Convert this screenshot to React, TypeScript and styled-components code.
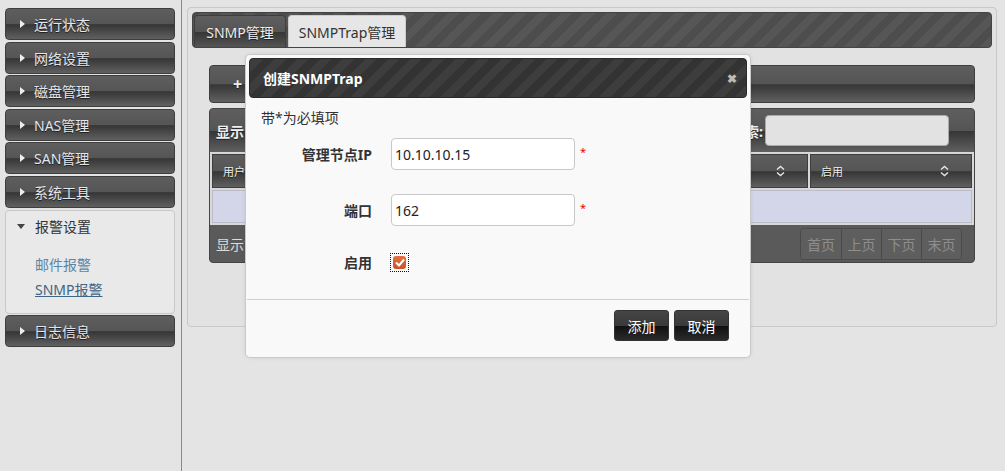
import styled, { createGlobalStyle, css } from "styled-components";

const GlobalStyle = createGlobalStyle`
  html, body {
    margin: 0;
    padding: 0;
    background: #e4e4e4;
    font-family: "Noto Sans", "Noto Sans CJK SC", sans-serif;
    font-size: 14px;
    color: #333;
  }
  * { box-sizing: border-box; }
`;

const glossy = css`
  background: linear-gradient(
    to bottom,
    #5e5e5e 0%,
    #555 50%,
    #363636 52%,
    #4a4a4a 75%,
    #606060 100%
  );
  border: 1px solid #3e3e3e;
  border-radius: 4px;
  color: #eee;
  text-shadow: 0 1px 0 #222;
`;

const stripes = (base: string) => css`
  background-color: ${base};
  background-image: repeating-linear-gradient(
    -45deg,
    rgba(255, 255, 255, 0.05) 0 8px,
    rgba(0, 0, 0, 0) 8px 16px
  );
`;

const Page = styled.div`
  position: relative;
  display: flex;
  width: 1005px;
  height: 471px;
  overflow: hidden;
`;

const Sidebar = styled.nav`
  width: 182px;
  flex: none;
  border-right: 1px solid #8a8a8a;
  padding: 8px 6px 0 5px;
  display: flex;
  flex-direction: column;
  gap: 1.6px;
`;

const NavItem = styled.div`
  ${glossy};
  height: 32px;
  flex: none;
  display: flex;
  align-items: center;
  padding-left: 12px;
  gap: 6px;
  font-size: 14px;
  color: #e4e6ee;
`;

const Arrow = styled.span<{ $open?: boolean }>`
  width: 0;
  height: 0;
  ${(p) =>
    p.$open
      ? css`
          border-left: 4px solid transparent;
          border-right: 4px solid transparent;
          border-top: 5px solid #444;
          margin-right: 2px;
        `
      : css`
          border-top: 4px solid transparent;
          border-bottom: 4px solid transparent;
          border-left: 5px solid #eee;
          margin-left: 2px;
          margin-right: 3px;
        `}
`;

const NavGroup = styled.div`
  background: #e9e9e9;
  border: 1px solid #c8c8c8;
  border-radius: 4px;
  height: 104px;
  flex: none;
  padding: 0 0 0 11px;
`;

const GroupHead = styled.div`
  height: 31px;
  display: flex;
  align-items: center;
  gap: 8px;
  color: #333;
`;

const SubLinks = styled.div`
  display: flex;
  flex-direction: column;
  gap: 5px;
  padding: 13px 0 0 18px;
`;

const SubLink = styled.a<{ $active?: boolean }>`
  color: ${(p) => (p.$active ? "#3f6586" : "#5b84a6")};
  text-decoration: ${(p) => (p.$active ? "underline" : "none")};
  font-size: 14px;
  line-height: 20px;
`;

const Main = styled.main`
  flex: 1;
  min-width: 0;
  padding: 7px 8px 0 5px;
`;

const Panel = styled.section`
  height: 320px;
  background: #e2e2e2;
  border: 1px solid #c9c9c9;
  border-radius: 4px;
  padding: 4px 4px 0 4px;
`;

const TabBar = styled.div`
  ${stripes("#4d4d4d")};
  height: 36px;
  border-radius: 4px;
  border: 1px solid #444;
  display: flex;
  align-items: flex-end;
  gap: 2px;
  padding-left: 1px;
`;

const Tab = styled.div<{ $active?: boolean }>`
  height: 32px;
  display: flex;
  align-items: center;
  justify-content: center;
  border-radius: 4px 4px 0 0;
  font-size: 14px;
  ${(p) =>
    p.$active
      ? css`
          width: 118px;
          background: #e6e6e6;
          color: #333;
          border: 1px solid #ccc;
          border-bottom: none;
        `
      : css`
          width: 92px;
          background: linear-gradient(#5e5e5e 0%, #555 50%, #363636 52%, #555 100%);
          color: #eee;
          border: 1px solid #3e3e3e;
          border-bottom: none;
          text-shadow: 0 1px 0 #222;
        `}
`;

const Content = styled.div`
  padding: 17px 17px 0 17px;
  display: flex;
  flex-direction: column;
  gap: 5px;
`;

const Toolbar = styled.div`
  ${glossy};
  height: 38px;
  display: flex;
  align-items: center;
  padding-left: 23px;
  font-weight: bold;
  font-size: 16px;
`;

const Grid = styled.div`
  background: #5a5a5a;
  border: 1px solid #444;
  border-radius: 4px;
  overflow: hidden;
`;

const GridTop = styled.div`
  ${glossy};
  border: none;
  border-radius: 0;
  height: 43px;
  display: flex;
  align-items: center;
  justify-content: space-between;
  padding: 0 25px 0 6px;
  font-weight: bold;
`;

const Search = styled.div`
  display: flex;
  align-items: center;
  gap: 2px;
`;

const SearchBox = styled.div`
  width: 184px;
  height: 31px;
  background: #e2e2e2;
  border: 1px solid #aaa;
  border-radius: 4px;
`;

const HeadRow = styled.div`
  display: grid;
  grid-template-columns: 1fr 150px 146px 162px;
  gap: 2px;
  padding: 2px 2px 0 2px;
  background: #d8d8d8;
`;

const HeadCell = styled.div`
  ${glossy};
  border-radius: 0;
  height: 34px;
  display: flex;
  align-items: center;
  justify-content: space-between;
  padding: 0 22px 0 10px;
  font-size: 11px;
`;

const DataRow = styled.div`
  background: #d8d8d8;
  padding: 2px;
`;

const DataCell = styled.div`
  height: 33px;
  background: #d3d6e8;
  border: 1px solid #bcbcc8;
`;

const GridFoot = styled.div`
  height: 37px;
  display: flex;
  align-items: center;
  justify-content: space-between;
  padding: 0 12px 0 6px;
  color: #ddd;
`;

const Pager = styled.div`
  display: flex;
  border-radius: 4px;
  overflow: hidden;
  border: 1px solid #4a4a4a;
`;

const PageBtn = styled.span`
  width: 40px;
  height: 30px;
  display: flex;
  align-items: center;
  justify-content: center;
  background: #5e5e5e;
  color: #8e8e8e;
  border-left: 1px solid #4a4a4a;
  &:first-child { border-left: none; }
`;

const Dialog = styled.div`
  position: absolute;
  left: 245px;
  top: 54px;
  width: 506px;
  height: 304px;
  background: #f9f9f9;
  border: 1px solid #c9c9c9;
  border-radius: 5px;
  padding: 3px;
  box-shadow: 0 0 4px rgba(0, 0, 0, 0.08);
`;

const DialogHead = styled.div`
  ${stripes("#333")};
  height: 40px;
  border-radius: 4px;
  border: 1px solid #2a2a2a;
  display: flex;
  align-items: center;
  justify-content: space-between;
  padding: 0 9px 0 13px;
  color: #fff;
  font-weight: bold;
  font-size: 14px;
`;

const Close = styled.span`
  color: #bbb;
  font-size: 12px;
  font-weight: bold;
`;

const Hint = styled.div`
  padding: 9px 0 0 12px;
  height: 38px;
  font-size: 14px;
`;

const Form = styled.div`
  display: flex;
  flex-direction: column;
  gap: 24px;
  margin-top: 2px;
`;

const Row = styled.div`
  display: grid;
  grid-template-columns: 123px 184px auto;
  column-gap: 19px;
  align-items: center;
`;

const Label = styled.label`
  text-align: right;
  font-weight: bold;
  color: #333;
  font-size: 14px;
`;

const InputWrap = styled.div`
  display: flex;
  align-items: flex-start;
  gap: 5px;
`;

const Input = styled.input`
  width: 184px;
  height: 32px;
  border: 1px solid #c8c8c8;
  border-radius: 4px;
  background: #fff;
  padding: 0 3px;
  font-family: "Noto Sans", sans-serif;
  font-size: 14px;
  color: #222;
  outline: none;
`;

const Req = styled.span`
  color: #e00;
  font-size: 11px;
  margin-top: 6px;
`;

const CheckRow = styled(Row)`
  margin-top: 2px;
`;

const Checkbox = styled.span`
  width: 17px;
  height: 17px;
  outline: 1px dotted #111;
  display: flex;
  align-items: center;
  justify-content: center;
`;

const CheckFace = styled.span`
  width: 13px;
  height: 13px;
  border-radius: 3px;
  background: linear-gradient(#e2713f, #c9532a);
  display: flex;
  align-items: center;
  justify-content: center;
`;

const Divider = styled.hr`
  border: none;
  border-top: 1px solid #cfcfcf;
  margin: 27px -2px 0 -2px;
`;

const Actions = styled.div`
  display: flex;
  justify-content: flex-end;
  gap: 5px;
  padding: 10px 18px 0 0;
`;

const Btn = styled.button`
  background: linear-gradient(#454545 0%, #3a3a3a 50%, #111 52%, #2a2a2a 100%);
  border: 1px solid #333;
  border-radius: 3px;
  color: #fff;
  width: 55px;
  height: 31px;
  font-family: "Noto Sans CJK SC", sans-serif;
  font-size: 14px;
  padding: 0;
`;

const nav = ["运行状态", "网络设置", "磁盘管理", "NAS管理", "SAN管理", "系统工具"];

function Sort() {
  return (
    <svg width="9" height="12" viewBox="0 0 9 12">
      <path d="M1 4.5 L4.5 1.5 L8 4.5 M1 7.5 L4.5 10.5 L8 7.5" fill="none" stroke="#e6e6e6" strokeWidth="1.4" />
    </svg>
  );
}

export default function App() {
  return (
    <Page>
      <GlobalStyle />
      <Sidebar>
        {nav.map((n) => (
          <NavItem key={n}>
            <Arrow />
            {n}
          </NavItem>
        ))}
        <NavGroup>
          <GroupHead>
            <Arrow $open />
            报警设置
          </GroupHead>
          <SubLinks>
            <SubLink>邮件报警</SubLink>
            <SubLink $active>SNMP报警</SubLink>
          </SubLinks>
        </NavGroup>
        <NavItem>
          <Arrow />
          日志信息
        </NavItem>
      </Sidebar>

      <Main>
        <Panel>
          <TabBar>
            <Tab>SNMP管理</Tab>
            <Tab $active>SNMPTrap管理</Tab>
          </TabBar>
          <Content>
            <Toolbar>+</Toolbar>
            <Grid>
              <GridTop>
                <span>显示</span>
                <Search>
                  <span>搜索:</span>
                  <SearchBox />
                </Search>
              </GridTop>
              <HeadRow>
                <HeadCell>用户名<Sort /></HeadCell>
                <HeadCell>管理节点IP<Sort /></HeadCell>
                <HeadCell>端口<Sort /></HeadCell>
                <HeadCell>启用<Sort /></HeadCell>
              </HeadRow>
              <DataRow>
                <DataCell />
              </DataRow>
              <GridFoot>
                <span>显示第 0 至 0 项结果</span>
                <Pager>
                  <PageBtn>首页</PageBtn>
                  <PageBtn>上页</PageBtn>
                  <PageBtn>下页</PageBtn>
                  <PageBtn>末页</PageBtn>
                </Pager>
              </GridFoot>
            </Grid>
          </Content>
        </Panel>
      </Main>

      <Dialog>
        <DialogHead>
          <span>创建SNMPTrap</span>
          <Close>✖</Close>
        </DialogHead>
        <Hint>带*为必填项</Hint>
        <Form>
          <Row>
            <Label>管理节点IP</Label>
            <InputWrap>
              <Input defaultValue="10.10.10.15" />
              <Req>*</Req>
            </InputWrap>
          </Row>
          <Row>
            <Label>端口</Label>
            <InputWrap>
              <Input defaultValue="162" />
              <Req>*</Req>
            </InputWrap>
          </Row>
          <CheckRow>
            <Label>启用</Label>
            <Checkbox>
              <CheckFace>
                <svg width="10" height="9" viewBox="0 0 10 9">
                  <path d="M1 4.5 L4 7.5 L9 1.5" fill="none" stroke="#fff" strokeWidth="2" />
                </svg>
              </CheckFace>
            </Checkbox>
          </CheckRow>
        </Form>
        <Divider />
        <Actions>
          <Btn>添加</Btn>
          <Btn>取消</Btn>
        </Actions>
      </Dialog>
    </Page>
  );
}
